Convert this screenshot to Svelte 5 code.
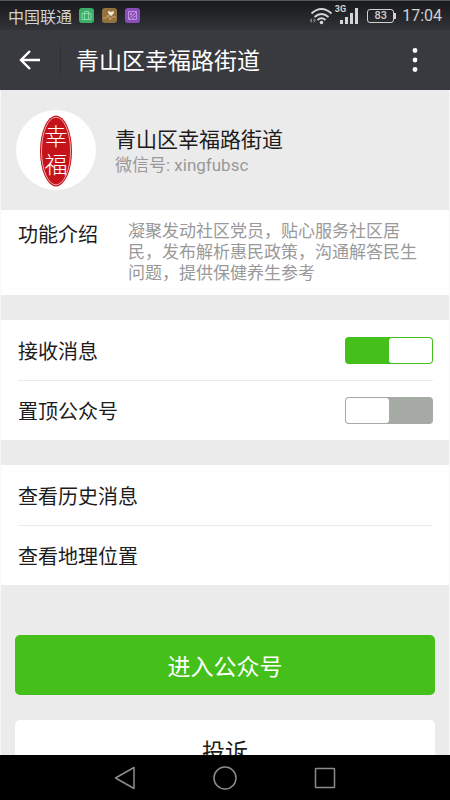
<script>
  let receive = $state(true);
  let pinned = $state(false);
</script>

<div class="screen">
  <div class="status">
    <span class="carrier">中国联通</span>
    <svg class="app" viewBox="0 0 15 15" aria-hidden="true">
      <rect width="15" height="15" rx="3" fill="#3fae6b" />
      <path d="M3 5.500h9v6H3zM5.500 5.500v-2h4v2M5.500 6v5M9.500 6v5" fill="none" stroke="#8fe0ad" stroke-width="0.900" />
    </svg>
    <svg class="app" viewBox="0 0 15 15" aria-hidden="true">
      <rect width="15" height="15" rx="3" fill="#93713f" />
      <path d="M1 10h3l2-3 2 5 2-3h4" fill="none" stroke="#c8a874" />
      <path d="M9 8C4 4.500 6 2 9 4c3-2 5 .5 0 4z" fill="#f4ead8" />
    </svg>
    <svg class="app" viewBox="0 0 15 15" aria-hidden="true">
      <rect width="15" height="15" rx="3" fill="#8a4dbb" />
      <path d="M3.500 3.500h8v8h-8zM4 11l7-7M8 11c0-2 1-3 3-3" fill="none" stroke="#caa2e6" stroke-width="0.800" />
      <circle cx="6" cy="6" r="1" fill="#caa2e6" />
    </svg>
    <span class="spacer"></span>
    <svg class="wifi" viewBox="0 0 24 18" aria-hidden="true">
      <g fill="none" stroke="#d4d5d6" stroke-width="2">
        <path d="M2.500 6.500q10-9 20 0" />
        <path d="M5.500 10q7-6 14 0" />
        <path d="M8.500 13q4-3.500 8 0" />
      </g>
      <circle cx="12.500" cy="15.500" r="1.800" fill="#d4d5d6" />
      <path d="M3 11v5l-2.500-2.500zM4.500 11v5l2.500-2.500z" fill="#77797b" />
    </svg>
    <span class="net">3G</span>
    <svg class="signal" viewBox="0 0 19 16" aria-hidden="true">
      <path d="M0 12h3v4H0zM5 9h3v7H5zM10 5h3v11h-3zM15 0h3v16h-3z" fill="#d4d5d6" />
    </svg>
    <span class="battery">83</span>
    <span class="time">17:04</span>
  </div>

  <header>
    <button class="back" aria-label="返回">
      <svg width="22" height="20" viewBox="0 0 22 20" aria-hidden="true">
        <path d="M11 1L2 10l9 9M2 10h19" fill="none" stroke="#fff" stroke-width="2.400" />
      </svg>
    </button>
    <h1>青山区幸福路街道</h1>
    <button class="more" aria-label="更多">
      <svg width="6" height="24" viewBox="0 0 6 24" fill="#fff" aria-hidden="true">
        <circle cx="3" cy="2.500" r="2.400" /><circle cx="3" cy="12" r="2.400" /><circle cx="3" cy="21.500" r="2.400" />
      </svg>
    </button>
  </header>

  <main>
    <section class="profile">
      <svg class="avatar" viewBox="0 0 80 80" role="img" aria-label="幸福">
        <circle cx="40" cy="40" r="40" fill="#fff" />
        <ellipse cx="40" cy="41" rx="16" ry="35.500" fill="#c5131c" />
        <ellipse cx="40" cy="41" rx="14.500" ry="33.800" fill="none" stroke="#f0b9b9" stroke-width="0.900" />
        <text class="seal" x="40" y="35">幸</text>
        <text class="seal" x="40" y="63">福</text>
      </svg>
      <div>
        <h2>青山区幸福路街道</h2>
        <p>微信号: xingfubsc</p>
      </div>
    </section>

    <section class="intro">
      <h3>功能介绍</h3>
      <p>凝聚发动社区党员，贴心服务社区居民，发布解析惠民政策，沟通解答民生问题，提供保健养生参考</p>
    </section>

    <section class="group">
      <label class="row">接收消息<input type="checkbox" role="switch" bind:checked={receive} /></label>
      <label class="row">置顶公众号<input type="checkbox" role="switch" bind:checked={pinned} /></label>
    </section>

    <section class="group">
      <a class="row" href="#history">查看历史消息</a>
      <a class="row" href="#location">查看地理位置</a>
    </section>

    <div class="actions">
      <button class="primary">进入公众号</button>
      <button>投诉</button>
    </div>
  </main>

  <nav>
    <button aria-label="后退">
      <svg width="24" height="24" viewBox="0 0 24 24" aria-hidden="true"><path d="M21 1.500v21L2.500 12z" /></svg>
    </button>
    <button aria-label="主屏幕">
      <svg width="24" height="24" viewBox="0 0 24 24" aria-hidden="true"><circle cx="12" cy="12" r="11" /></svg>
    </button>
    <button aria-label="最近任务">
      <svg width="24" height="24" viewBox="0 0 24 24" aria-hidden="true"><rect x="2.500" y="2.500" width="19" height="19" rx="0.500" /></svg>
    </button>
  </nav>
</div>

<style>
  .screen {
    display: flex;
    flex-direction: column;
    height: 100vh;
    background: #ebebeb;
    color: #1c1c1c;
    font-family: Roboto, "Noto Sans CJK SC", sans-serif;
  }
  h1, h2, h3, p { margin: 0; font-weight: 400; }
  button { border: 0; padding: 0; font: inherit; color: inherit; background: none; }
  svg { display: block; flex: none; }

  .status {
    display: flex;
    align-items: center;
    flex: none;
    height: 30px;
    box-sizing: border-box;
    padding: 0 8px;
    border-top: 1px solid #55595a;
    background: linear-gradient(#17191b, #323338);
    color: #d0d1d2;
    font-size: 16px;
  }
  .carrier { margin-right: 7px; }
  .app { width: 15px; height: 15px; margin-right: 8px; }
  .spacer { flex: 1; }
  .wifi { width: 24px; height: 18px; }
  .net { align-self: flex-start; margin: 3px 0 0 2px; font-size: 9px; line-height: 10px; font-weight: 700; }
  .signal { width: 19px; height: 16px; margin-left: -6px; }
  .battery {
    position: relative;
    width: 25px;
    margin: 0 8px;
    border: 1px solid #d0d1d2;
    border-radius: 3px;
    font-size: 11px;
    line-height: 12px;
    font-weight: 500;
    text-align: center;
  }
  .battery::after {
    content: "";
    position: absolute;
    right: -3px;
    top: 3px;
    width: 2px;
    height: 6px;
    background: #d0d1d2;
  }

  header {
    display: flex;
    align-items: center;
    flex: none;
    height: 60px;
    background: #393a3f;
    color: #fff;
  }
  .back { display: grid; place-items: center; width: 61px; height: 30px; border-right: 1px solid #303136; }
  h1 { flex: 1; padding: 4px 0 0 15px; font-size: 23px; line-height: 32px; }
  .more { display: grid; place-items: center; width: 70px; height: 60px; }

  main { flex: 1; min-height: 0; overflow: hidden; border: solid #f8f8f8; border-width: 0 1px; }
  .profile { display: flex; align-items: center; gap: 19px; height: 120px; padding: 0 15px; }
  .avatar { width: 80px; height: 80px; }
  .seal { fill: #fff; font-size: 23px; font-weight: 300; text-anchor: middle; }
  .profile div { padding-top: 4px; }
  h2 { font-size: 21px; line-height: 26px; }
  .profile p { color: #999; font-size: 17px; line-height: 25px; }

  .intro { display: flex; gap: 30px; padding: 11px 20px 11px 17px; background: #fff; }
  h3 { flex: none; font-size: 20px; line-height: 28px; }
  .intro p { color: #999; font-size: 17px; line-height: 21px; }

  .group { margin-top: 25px; padding: 0 16px 0 17px; background: #fff; }
  .row {
    display: flex;
    align-items: center;
    justify-content: space-between;
    height: 60px;
    box-sizing: border-box;
    color: inherit;
    font-size: 20px;
    text-decoration: none;
  }
  .row + .row { border-top: 1px solid #ebebeb; }
  input {
    appearance: none;
    display: flex;
    width: 88px;
    height: 27px;
    margin: 0;
    padding: 1px;
    box-sizing: border-box;
    border-radius: 4px;
    background: #a6aaa5;
  }
  input::before { content: ""; width: 43px; border-radius: 3px; background: #fff; }
  input:checked { justify-content: flex-end; background: #45c01a; }

  .actions { display: flex; flex-direction: column; gap: 25px; padding: 50px 14px; }
  .actions button { height: 60px; border-radius: 5px; background: #fff; font-size: 23px; }
  .actions .primary { background: #45c01a; color: #fff; }

  nav {
    display: flex;
    justify-content: center;
    align-items: center;
    gap: 76px;
    flex: none;
    height: 45px;
    background: #000;
  }
  nav svg { fill: none; stroke: #8c8c8c; stroke-width: 1.500; stroke-linejoin: round; }
</style>
